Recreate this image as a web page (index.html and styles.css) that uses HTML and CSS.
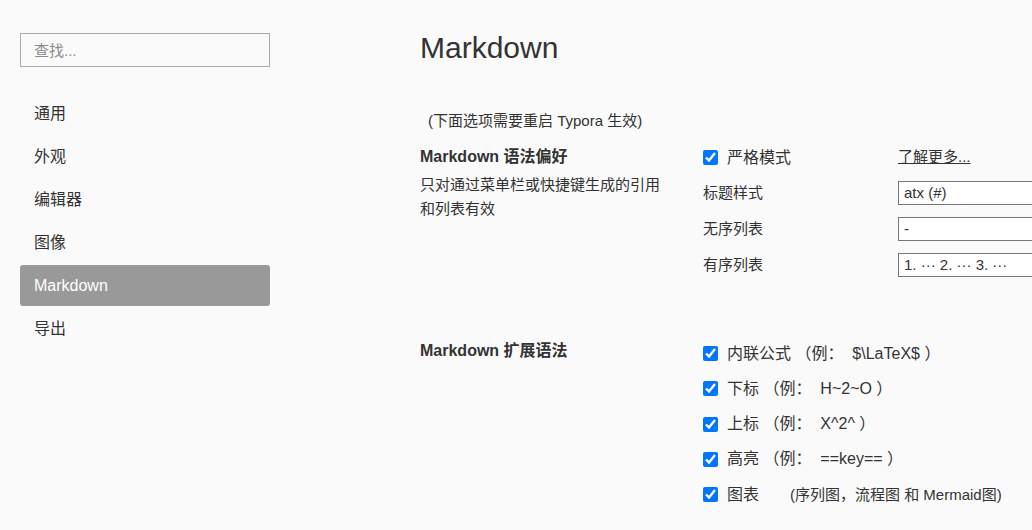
FILE: index.html
```html
<!DOCTYPE html>
<html lang="zh-CN">
<head>
<meta charset="utf-8">
<title>偏好设置 - Markdown</title>
<link rel="stylesheet" href="styles.css">
</head>
<body>
<div class="app">
  <aside class="sidebar">
    <input class="search" type="text" placeholder="查找...">
    <nav class="nav">
      <div class="nav-item">通用</div>
      <div class="nav-item">外观</div>
      <div class="nav-item">编辑器</div>
      <div class="nav-item">图像</div>
      <div class="nav-item active">Markdown</div>
      <div class="nav-item">导出</div>
    </nav>
  </aside>
  <main class="content">
    <h1 class="title">Markdown</h1>
    <p class="hint">(下面选项需要重启 Typora 生效)</p>

    <section class="group group-syntax">
      <div class="group-info">
        <h2 class="group-title">Markdown 语法偏好</h2>
        <p class="group-desc">只对通过菜单栏或快捷键生成的引用和列表有效</p>
      </div>
      <div class="settings-grid">
        <label class="check strict"><input type="checkbox" checked><span>严格模式</span></label>
        <a class="more">了解更多...</a>
        <span class="opt-label">标题样式</span>
        <div class="select-box">atx (#)</div>
        <span class="opt-label">无序列表</span>
        <div class="select-box">-</div>
        <span class="opt-label">有序列表</span>
        <div class="select-box">1. ··· 2. ··· 3. ···</div>
      </div>
    </section>

    <section class="group group-ext">
      <div class="group-info">
        <h2 class="group-title title-ext">Markdown 扩展语法</h2>
      </div>
      <div class="ext-list">
        <label class="check ext-row"><input type="checkbox" checked><span>内联公式 （例：&nbsp; $\LaTeX$ ）</span></label>
        <label class="check ext-row"><input type="checkbox" checked><span>下标 （例：&nbsp; H~2~O ）</span></label>
        <label class="check ext-row"><input type="checkbox" checked><span>上标 （例：&nbsp; X^2^ ）</span></label>
        <label class="check ext-row"><input type="checkbox" checked><span>高亮 （例：&nbsp; ==key== ）</span></label>
        <label class="check ext-row"><input type="checkbox" checked><span>图表</span><span class="ext-note">(序列图，流程图 和 Mermaid图)</span></label>
      </div>
    </section>
  </main>
</div>
</body>
</html>
```

FILE: styles.css
```css
html, body {
  margin: 0;
  padding: 0;
  overflow: hidden;
}

body {
  background: #fafafa;
  color: #333;
  font-family: "Liberation Sans", "Noto Sans CJK SC", sans-serif;
  font-size: 15px;
  line-height: 24px;
}

.app {
  display: flex;
  width: 1032px;
  height: 530px;
}

.sidebar {
  flex: 0 0 250px;
  padding: 33px 0 0 20px;
}

.search {
  display: block;
  box-sizing: border-box;
  width: 250px;
  height: 34px;
  margin: 0;
  padding: 0 0 0 13px;
  border: 1px solid #aaa;
  border-radius: 0;
  background: transparent;
  font-family: inherit;
  font-size: 15px;
  color: #333;
  outline: none;
}

.search::placeholder {
  color: #8a8a8a;
}

.nav {
  display: flex;
  flex-direction: column;
  gap: 2px;
  margin-top: 26px;
}

.nav-item {
  height: 41px;
  line-height: 41px;
  padding-left: 14px;
  font-size: 16px;
  color: #333;
  border-radius: 3px;
}

.nav-item.active {
  background: #999;
  color: #fff;
}

.content {
  flex: 1;
  margin-left: 150px;
  min-width: 0;
}

.title {
  margin: 30px 0 0;
  font-size: 30px;
  line-height: 36px;
  font-weight: normal;
  color: #333;
}

.hint {
  margin: 43px 0 0;
  padding-left: 8px;
  font-size: 15px;
  line-height: 24px;
}

.group {
  display: grid;
  grid-template-columns: 283px 1fr;
}

.group-syntax {
  margin-top: 12px;
}

.group-ext {
  margin-top: 59px;
}

.group-title {
  margin: 0;
  font-size: 16px;
  line-height: 24px;
  font-weight: bold;
  color: #333;
}

.title-ext {
  margin-top: 3px;
}

.group-desc {
  margin: 4px 0 0;
  width: 245px;
  font-size: 15px;
  line-height: 24px;
}

.settings-grid {
  display: grid;
  grid-template-columns: 195px 160px;
  grid-auto-rows: 24px;
  row-gap: 12px;
  align-items: center;
}

.settings-grid > .check {
  margin-bottom: -1px;
}

.check {
  display: flex;
  align-items: center;
  gap: 9px;
  white-space: nowrap;
}

.strict {
  font-size: 16px;
}

.check input {
  width: 15px;
  height: 15px;
  margin: 0;
  accent-color: #0075ff;
}

.more {
  color: #333;
  text-decoration: underline;
  white-space: nowrap;
}

.opt-label {
  font-size: 15px;
}

.select-box {
  box-sizing: border-box;
  height: 24px;
  line-height: 22px;
  padding-left: 5px;
  border: 1px solid #777;
  background: #fff;
  font-size: 15px;
  white-space: nowrap;
}

.ext-list {
  display: flex;
  flex-direction: column;
}

.ext-row {
  height: 35.25px;
  font-size: 16px;
}

.ext-note {
  margin-left: 22px;
  font-size: 15px;
}
```
